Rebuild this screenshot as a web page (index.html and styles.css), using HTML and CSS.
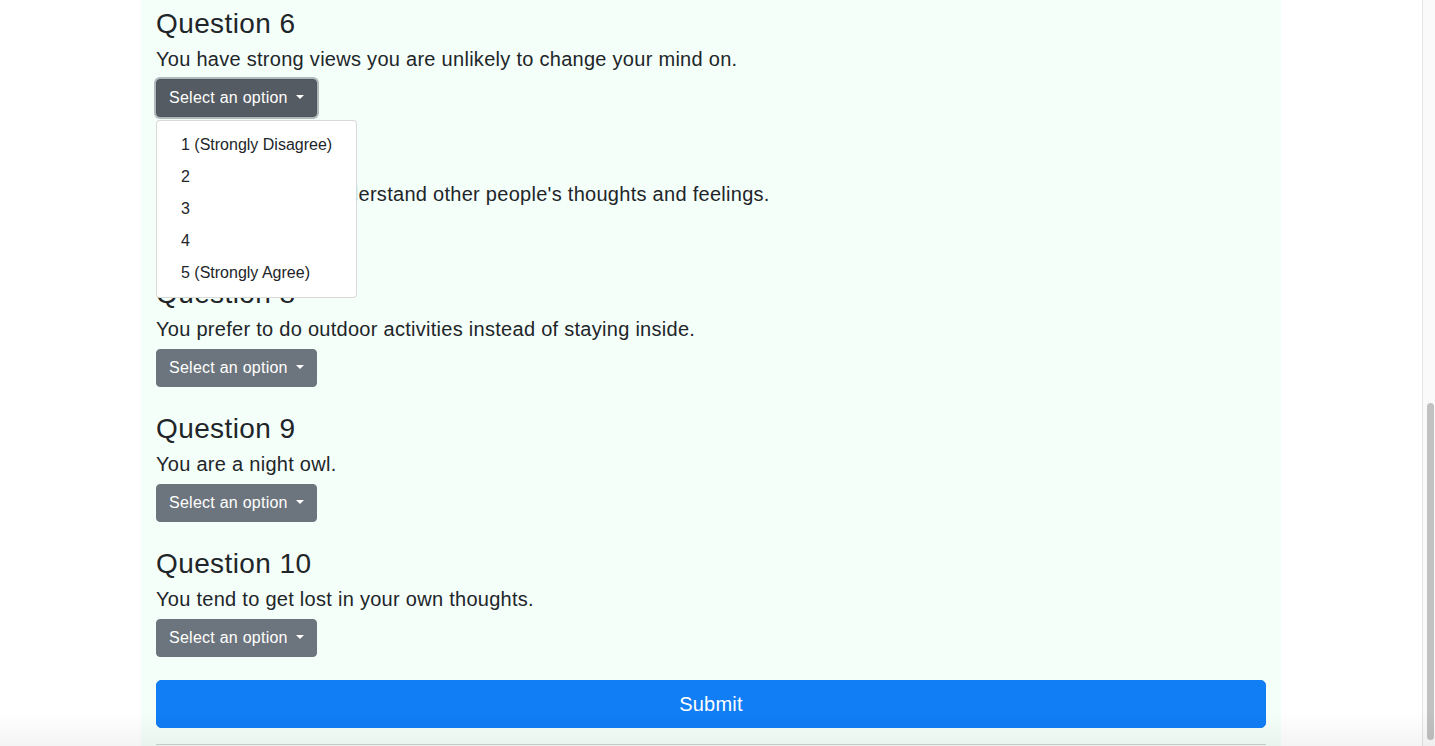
FILE: index.html
```html
<!DOCTYPE html>
<html lang="en">
<head>
<meta charset="utf-8">
<title>Questionnaire</title>
<link rel="stylesheet" href="styles.css">
</head>
<body>
<div class="page">
  <main class="container">
    <section class="question">
      <h3 class="q-title">Question 6</h3>
      <h5 class="q-text">You have strong views you are unlikely to change your mind on.</h5>
      <div class="dropdown">
        <button class="btn btn-secondary dropdown-toggle is-open" type="button">Select an option</button>
        <ul class="dropdown-menu">
          <li class="dropdown-item">1 (Strongly Disagree)</li>
          <li class="dropdown-item">2</li>
          <li class="dropdown-item">3</li>
          <li class="dropdown-item">4</li>
          <li class="dropdown-item">5 (Strongly Agree)</li>
        </ul>
      </div>
    </section>
    <section class="question">
      <h3 class="q-title">Question 7</h3>
      <h5 class="q-text">You find it easy to understand other people's thoughts and feelings.</h5>
      <div class="dropdown">
        <button class="btn btn-secondary dropdown-toggle" type="button">Select an option</button>
      </div>
    </section>
    <section class="question">
      <h3 class="q-title">Question 8</h3>
      <h5 class="q-text">You prefer to do outdoor activities instead of staying inside.</h5>
      <div class="dropdown">
        <button class="btn btn-secondary dropdown-toggle" type="button">Select an option</button>
      </div>
    </section>
    <section class="question">
      <h3 class="q-title">Question 9</h3>
      <h5 class="q-text">You are a night owl.</h5>
      <div class="dropdown">
        <button class="btn btn-secondary dropdown-toggle" type="button">Select an option</button>
      </div>
    </section>
    <section class="question">
      <h3 class="q-title">Question 10</h3>
      <h5 class="q-text">You tend to get lost in your own thoughts.</h5>
      <div class="dropdown">
        <button class="btn btn-secondary dropdown-toggle" type="button">Select an option</button>
      </div>
    </section>
    <button class="btn btn-primary btn-lg btn-block" type="submit">Submit</button>
    <div class="divider"></div>
  </main>
</div>
<aside class="scrollbar"><div class="scroll-thumb"></div></aside>
<div class="bottom-shade"></div>
</body>
</html>
```

FILE: styles.css
```css
* { box-sizing: border-box; }

html, body {
  margin: 0;
  height: 100%;
}

body {
  display: flex;
  overflow: hidden;
  font-family: "Liberation Sans", Arial, Helvetica, sans-serif;
  color: #212529;
  background: #ffffff;
}

.page {
  flex: 1;
  min-width: 0;
  overflow: hidden;
}

.container {
  width: 1140px;
  margin: 0 auto;
  padding: 5.4px 15px 0;
  min-height: 100%;
  background: #f5fffa;
}

.question {
  margin-bottom: 23.4px;
}

.q-title {
  margin: 0 0 6.5px;
  padding-top: 1.5px;
  font-size: 28px;
  line-height: 1.2;
  font-weight: 400;
  letter-spacing: 0.4px;
}

.q-text {
  margin: 0 0 8px;
  font-size: 20px;
  line-height: 1.2;
  font-weight: 400;
  letter-spacing: 0.28px;
}

.dropdown {
  position: relative;
  display: inline-block;
}

.btn {
  display: inline-block;
  font-family: inherit;
  font-size: 16px;
  line-height: 1.5;
  font-weight: 400;
  padding: 6px 12px;
  border: 1px solid transparent;
  border-radius: 4px;
  cursor: pointer;
  text-align: center;
  letter-spacing: 0.25px;
}

.btn-secondary {
  color: #ffffff;
  background: #6c757d;
  border-color: #6c757d;
}

.btn-secondary.is-open {
  background: #545b62;
  border-color: #4e555b;
  box-shadow: 0 0 0 2px rgba(130, 138, 145, 0.6);
}

.dropdown-toggle::after {
  content: "";
  display: inline-block;
  vertical-align: 0.255em;
  border-top: 0.3em solid #ffffff;
  border-right: 0.3em solid transparent;
  border-left: 0.3em solid transparent;
  border-bottom: 0;
  margin-left: 8px;
}

.dropdown-menu {
  position: absolute;
  top: 100%;
  left: 0;
  z-index: 10;
  margin: 3px 0 0;
  padding: 8px 0;
  list-style: none;
  min-width: 160px;
  background: #ffffff;
  border: 1px solid rgba(0, 0, 0, 0.15);
  border-radius: 4px;
  letter-spacing: 0;
}

.dropdown-item {
  padding: 4px 24px;
  font-size: 16px;
  line-height: 1.5;
  white-space: nowrap;
  color: #212529;
}

.btn-primary {
  color: #ffffff;
  background: #127ef5;
  border-color: #127ef5;
}

.btn-lg {
  font-size: 20px;
  line-height: 1.5;
  padding: 8px 16px;
  border-radius: 5px;
}

.btn-block {
  display: block;
  width: 100%;
  margin-top: 1px;
}

.divider {
  margin-top: 16px;
  border-top: 1px solid #cfd4d1;
  height: 10px;
}

.scrollbar {
  flex: 0 0 13px;
  height: 100%;
  background: #fafafa;
  border-left: 1px solid #e4e4e4;
  padding-top: 403px;
  padding-left: 4px;
}

.scroll-thumb {
  width: 7px;
  height: 337px;
  border-radius: 4px;
  background: #c1c1c1;
}

.bottom-shade {
  position: fixed;
  left: 0;
  right: 0;
  bottom: 0;
  height: 34px;
  pointer-events: none;
  background: linear-gradient(to bottom, rgba(0, 0, 0, 0), rgba(0, 0, 0, 0.045));
}
```
